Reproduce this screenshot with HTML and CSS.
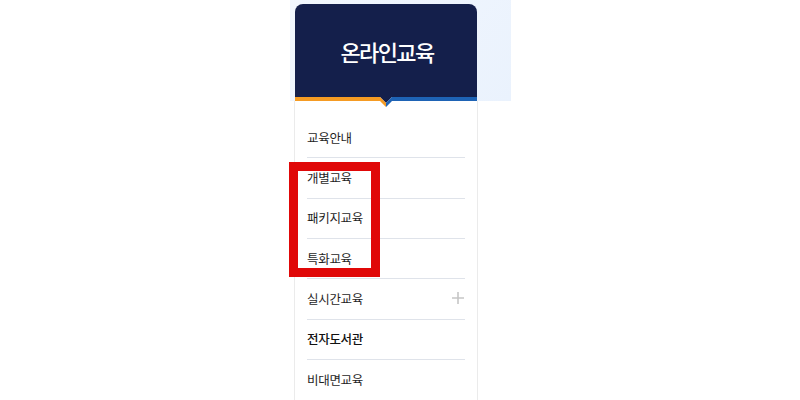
FILE: index.html
```html
<!DOCTYPE html>
<html lang="ko">
<head>
<meta charset="utf-8">
<title>온라인교육</title>
<link rel="stylesheet" href="styles.css">
</head>
<body>
<div class="page">
  <aside class="sidebar">
    <div class="hero">
      <div class="head"><h2 class="title">온라인교육</h2></div>
      <svg class="stripe" width="182" height="12" viewBox="0 0 182 12">
        <polygon points="85,0 97,0 91,6" fill="#141f4b"/>
        <polygon points="0,0 85,0 91,6 91,10 85,4 0,4" fill="#f59b23"/>
        <polygon points="182,0 97,0 91,6 91,10 97,4 182,4" fill="#1e63b5"/>
      </svg>
    </div>
    <nav class="panel">
      <ul class="menu">
        <li class="item">교육안내</li>
        <li class="item">개별교육</li>
        <li class="item">패키지교육</li>
        <li class="item">특화교육</li>
        <li class="item">실시간교육
          <svg class="plus" width="12" height="12" viewBox="0 0 12 12"><path d="M6 0V12M0 6H12" stroke="#c6c6c6" stroke-width="1.6" fill="none"/></svg>
        </li>
        <li class="item item-strong">전자도서관</li>
        <li class="item">비대면교육</li>
      </ul>
    </nav>
  </aside>
  <div class="mark"></div>
</div>
</body>
</html>
```
FILE: styles.css
```css
html, body {
  margin: 0;
  padding: 0;
  background: #ffffff;
}
body {
  font-family: "Noto Sans CJK KR", "Noto Sans", sans-serif;
  color: #222;
  overflow: hidden;
  height: 400px;
}
.page {
  padding-left: 290px;
}
.sidebar {
  width: 221px;
}
.hero {
  height: 101px;
  box-sizing: border-box;
  padding: 4px 34px 0 5px;
  background: linear-gradient(135deg, #f2f7fe 0%, #eaf2fd 100%);
}
.head {
  height: 93px;
  background: #141f4b;
  border-radius: 8px 8px 0 0;
  display: flex;
  align-items: center;
  justify-content: center;
}
.title {
  margin: 0;
  color: #ffffff;
  font-size: 22px;
  font-weight: 500;
  letter-spacing: -1.6px;
  padding-left: 2px;
  line-height: 1;
}
.stripe {
  display: block;
  margin-bottom: -8px;
  position: relative;
  z-index: 1;
}
.panel {
  width: 184px;
  margin-left: 4px;
  box-sizing: border-box;
  border-left: 1px solid #ebebeb;
  border-right: 1px solid #ebebeb;
  padding: 17px 12px 0;
  height: 299px;
}
.menu {
  list-style: none;
  margin: 0;
  padding: 0;
}
.item {
  height: 40.33px;
  box-sizing: border-box;
  border-bottom: 1px solid #dfe3ea;
  display: flex;
  align-items: center;
  justify-content: space-between;
  font-size: 12.5px;
  letter-spacing: -0.3px;
  color: #1f1f1f;
  padding-bottom: 1px;
}
.item:last-child {
  border-bottom: none;
}
.item-strong {
  font-weight: 500;
  color: #111;
}
.plus {
  display: block;
  margin-right: 1px;
}
.mark {
  position: absolute;
  left: 289px;
  top: 162px;
  width: 91px;
  height: 115px;
  box-sizing: border-box;
  border: 9px solid #e00808;
}
```
